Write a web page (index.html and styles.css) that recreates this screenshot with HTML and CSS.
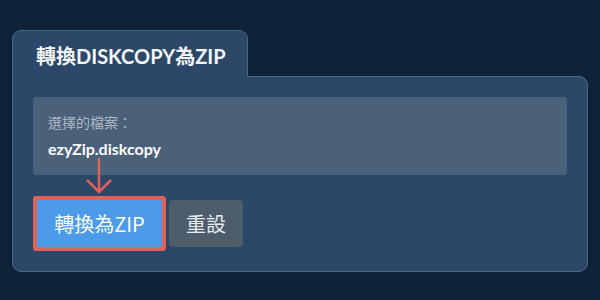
FILE: index.html
```html
<!DOCTYPE html>
<html lang="zh-Hant">
<head>
    <meta charset="UTF-8">
    <meta name="viewport" content="width=device-width, initial-scale=1.0">
    <title>轉換DISKCOPY為ZIP</title>
    <link rel="stylesheet" href="styles.css">
</head>
<body>
    <div class="converter">
        <div class="tab">轉換DISKCOPY為ZIP</div>

        <div class="panel">
            <div class="file-box">
                <div class="file-label">選擇的檔案：</div>
                <div class="file-name">ezyZip.diskcopy</div>
            </div>

            <div class="actions">
                <button class="btn btn-convert">轉換為ZIP</button>
                <button class="btn btn-reset">重設</button>
            </div>

            <svg class="hint-arrow" width="28" height="38" viewBox="0 0 28 38">
                <path d="M14 1 V35 M2 23 L14 35 L26 23" fill="none" stroke="#e0605a" stroke-width="2.5" stroke-linejoin="miter"/>
            </svg>
        </div>
    </div>
</body>
</html>
```

FILE: styles.css
```css
body {
    margin: 0;
    background-color: #0f2338;
    font-family: Lato, "Noto Sans CJK TC", sans-serif;
    color: #ebebeb;
}
.converter {
    margin: 30px 12px 0;
}
.tab {
    display: inline-block;
    position: relative;
    z-index: 1;
    margin-bottom: -1px;
    padding: 13px 21px 9px 23px;
    line-height: 24px;
    font-size: 20px;
    font-weight: bold;
    color: #f4f6f8;
    background-color: #2c4868;
    border: 1px solid #4c6686;
    border-bottom: none;
    border-radius: 9px 9px 0 0;
}
.panel {
    position: relative;
    padding: 20px 20px 24px;
    background-color: #2c4868;
    border: 1px solid #4c6686;
    border-radius: 0 9px 9px 9px;
}
.file-box {
    padding: 16px 15px;
    background-color: #4b6079;
    border-radius: 3px;
    margin-bottom: 25px;
}
.file-label {
    font-size: 14px;
    line-height: 20px;
    color: #aeb8c4;
    margin-bottom: 6px;
}
.file-name {
    font-size: 16px;
    line-height: 20px;
    font-weight: bold;
    color: #ffffff;
}
.actions {
    display: flex;
    gap: 7px;
    padding-left: 4px;
}
.btn {
    font-family: "Noto Sans CJK TC", Lato, sans-serif;
    font-size: 20px;
    line-height: 23px;
    padding: 12px 0;
    border: none;
    color: #ffffff;
    cursor: pointer;
}
.btn-convert {
    width: 125px;
    background-color: #4c9be8;
    border-radius: 1px;
    box-shadow: 0 0 0 4px #e0605a;
}
.btn-reset {
    width: 74px;
    background-color: #4e5d6c;
    border-radius: 4px;
    color: #e8ebee;
}
.hint-arrow {
    position: absolute;
    left: 72px;
    top: 80px;
}
```
